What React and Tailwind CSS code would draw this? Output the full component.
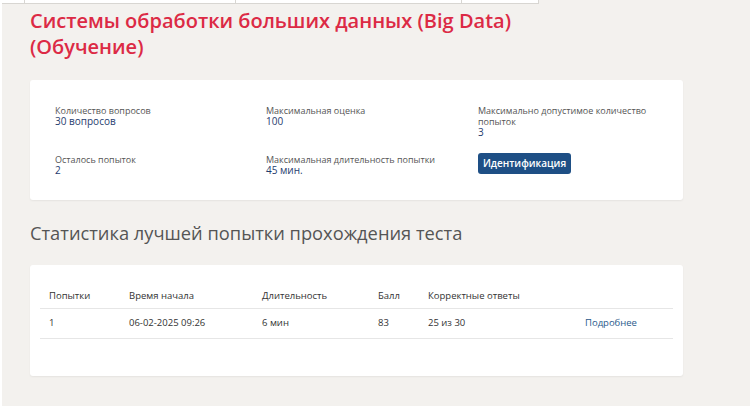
function InfoItem({ label, value }) {
  return (
    <div>
      <p className="text-[9px] leading-[11px] text-[#555]">{label}</p>
      <p className="text-[10px] leading-[11px] text-[#1f3c6e]">{value}</p>
    </div>
  )
}

export default function App() {
  const rows = [
    { n: '1', start: '06-02-2025 09:26', dur: '6 мин', score: '83', correct: '25 из 30' },
  ]

  return (
    <div className="h-[413px] w-[752px] bg-white" style={{ fontFamily: '"Open Sans", sans-serif' }}>
      <div className="relative ml-[2px] h-[406px] w-[748px] bg-[#f3f1ee]">
        {/* cut-off table strip at the top */}
        <div className="absolute left-0 top-0 flex h-[4px] w-[537px] border-b border-r border-[#d8d6d2] bg-white">
          <div className="w-[23px] border-r border-[#d8d6d2]" />
          <div className="w-[211px] border-r border-[#d8d6d2]" />
          <div className="w-[226px] border-r border-[#d8d6d2]" />
        </div>

        <div className="px-[28px] pt-[8px]">
          <h1 className="text-[20px] font-semibold leading-[26px] text-[#dc2a45]">
            Системы обработки больших данных (Big Data)
            <br />
            (Обучение)
          </h1>

          <div className="mt-[20px] w-[653px] rounded-[3px] bg-white px-[25px] pb-[24px] pt-[25px] shadow-[0_1px_2px_rgba(0,0,0,0.06)]">
            <div className="grid grid-cols-[211px_212px_1fr]">
              <InfoItem label="Количество вопросов" value="30 вопросов" />
              <InfoItem label="Максимальная оценка" value="100" />
              <div className="w-[175px]">
                <InfoItem label="Максимально допустимое количество попыток" value="3" />
              </div>
            </div>
            <div className="mt-[11px] grid grid-cols-[211px_212px_1fr] items-start">
              <div className="pt-[5px]">
                <InfoItem label="Осталось попыток" value="2" />
              </div>
              <div className="pt-[5px]">
                <InfoItem label="Максимальная длительность попытки" value="45 мин." />
              </div>
              <div>
                <button
                  type="button"
                  className="h-[21px] w-[93px] rounded-[3px] bg-[#1e4f85] text-[10px] font-semibold text-white"
                >
                  Идентификация
                </button>
              </div>
            </div>
          </div>

          <h2 className="mt-[21px] text-[18.3px] font-normal leading-[24px] text-[#555]">
            Статистика лучшей попытки прохождения теста
          </h2>

          <div className="mt-[20px] w-[653px] rounded-[3px] bg-white px-[10px] pb-[37px] pt-[24px] shadow-[0_1px_2px_rgba(0,0,0,0.06)]">
            <table className="w-full border-collapse text-[9.5px] text-[#333]">
              <thead>
                <tr className="border-b border-[#e6e6e6]">
                  <th className="w-[89px] pb-[5px] pl-[9px] text-left font-medium">Попытки</th>
                  <th className="w-[133px] pb-[5px] text-left font-medium">Время начала</th>
                  <th className="w-[116px] pb-[5px] text-left font-medium">Длительность</th>
                  <th className="w-[50px] pb-[5px] text-left font-medium">Балл</th>
                  <th className="w-[157px] pb-[5px] text-left font-medium">Корректные ответы</th>
                  <th className="pb-[5px]" />
                </tr>
              </thead>
              <tbody>
                {rows.map((r) => (
                  <tr key={r.n} className="border-b border-[#e6e6e6]">
                    <td className="py-[7px] pl-[9px]">{r.n}</td>
                    <td className="py-[7px]">{r.start}</td>
                    <td className="py-[7px]">{r.dur}</td>
                    <td className="py-[7px]">{r.score}</td>
                    <td className="py-[7px]">{r.correct}</td>
                    <td className="py-[7px] text-[#2a5a8c]">Подробнее</td>
                  </tr>
                ))}
              </tbody>
            </table>
          </div>
        </div>
      </div>
    </div>
  )
}
